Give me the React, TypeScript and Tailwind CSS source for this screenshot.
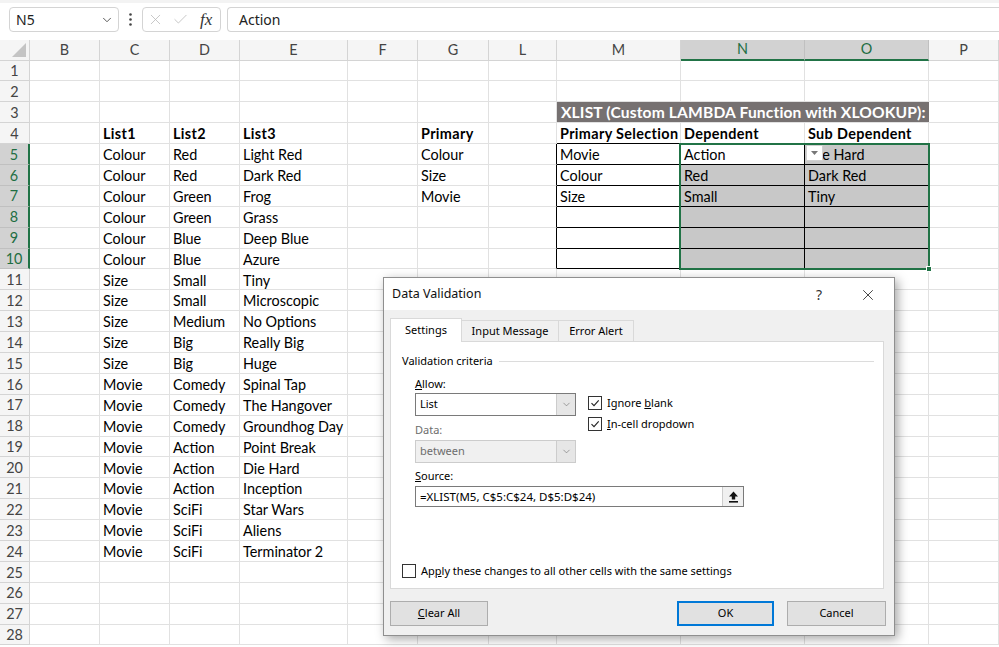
import { ChevronDown, X, Check } from 'lucide-react'

const cols = [
  { k: 'B', w: 'w-[70px]' },
  { k: 'C', w: 'w-[70px]' },
  { k: 'D', w: 'w-[70px]' },
  { k: 'E', w: 'w-[108px]' },
  { k: 'F', w: 'w-[70px]' },
  { k: 'G', w: 'w-[71px]' },
  { k: 'L', w: 'w-[68px]' },
  { k: 'M', w: 'w-[124px]' },
  { k: 'N', w: 'w-[124px]' },
  { k: 'O', w: 'w-[124px]' },
  { k: 'P', w: 'w-[70px]' },
]

const lists = [
  ['Colour', 'Red', 'Light Red'],
  ['Colour', 'Red', 'Dark Red'],
  ['Colour', 'Green', 'Frog'],
  ['Colour', 'Green', 'Grass'],
  ['Colour', 'Blue', 'Deep Blue'],
  ['Colour', 'Blue', 'Azure'],
  ['Size', 'Small', 'Tiny'],
  ['Size', 'Small', 'Microscopic'],
  ['Size', 'Medium', 'No Options'],
  ['Size', 'Big', 'Really Big'],
  ['Size', 'Big', 'Huge'],
  ['Movie', 'Comedy', 'Spinal Tap'],
  ['Movie', 'Comedy', 'The Hangover'],
  ['Movie', 'Comedy', 'Groundhog Day'],
  ['Movie', 'Action', 'Point Break'],
  ['Movie', 'Action', 'Die Hard'],
  ['Movie', 'Action', 'Inception'],
  ['Movie', 'SciFi', 'Star Wars'],
  ['Movie', 'SciFi', 'Aliens'],
  ['Movie', 'SciFi', 'Terminator 2'],
]

const values: Record<string, string> = {
  C4: 'List1',
  D4: 'List2',
  E4: 'List3',
  G4: 'Primary',
  M4: 'Primary Selection',
  N4: 'Dependent',
  O4: 'Sub Dependent',
  G5: 'Colour',
  G6: 'Size',
  G7: 'Movie',
  M5: 'Movie',
  M6: 'Colour',
  M7: 'Size',
  N5: 'Action',
  N6: 'Red',
  N7: 'Small',
  O5: 'Die Hard',
  O6: 'Dark Red',
  O7: 'Tiny',
}
lists.forEach((r, i) => {
  values[`C${i + 5}`] = r[0]
  values[`D${i + 5}`] = r[1]
  values[`E${i + 5}`] = r[2]
})

const rows = Array.from({ length: 28 }, (_, i) => i + 1)
const tableCols = ['M', 'N', 'O']

function Cell({ col, w, row }: { col: string; w: string; row: number }) {
  const inTable = tableCols.includes(col) && row >= 5 && row <= 10
  const rightBlack = inTable || (col === 'L' && row >= 5 && row <= 10)
  const bottomBlack = inTable || (tableCols.includes(col) && row === 4)
  const selected = (col === 'N' || col === 'O') && row >= 5 && row <= 10 && !(col === 'N' && row === 5)
  const text = values[`${col}${row}`]
  return (
    <div
      className={`${w} h-full shrink-0 border-r border-b flex items-center pl-[3px] pt-[2px] whitespace-nowrap overflow-visible relative ${
        rightBlack ? 'border-r-black' : 'border-r-[#e1e1e1]'
      } ${bottomBlack ? 'border-b-black' : 'border-b-[#e1e1e1]'} ${selected ? 'bg-[#c8c8c8]' : 'bg-white'} ${
        row === 4 ? 'font-bold tracking-[0.35px]' : ''
      }`}
    >
      {text}
      {col === 'O' && row === 5 && (
        <div className="absolute left-[1px] top-[1px] w-[17px] h-[16px] bg-white border border-[#d0d0d0] flex items-center justify-center">
          <svg width="7" height="4" viewBox="0 0 7 4">
            <path d="M0 0 L7 0 L3.5 4 Z" fill="#777" />
          </svg>
        </div>
      )}
    </div>
  )
}

function CheckBox({ checked }: { checked: boolean }) {
  return (
    <div className="w-[14px] h-[14px] border border-[#333] bg-white flex items-center justify-center shrink-0">
      {checked && (
        <svg width="10" height="10" viewBox="0 0 10 10">
          <path d="M1.5 5.2 L4 7.7 L8.7 2.3" fill="none" stroke="#222" strokeWidth="1.1" />
        </svg>
      )}
    </div>
  )
}

function Select({ value, disabled }: { value: string; disabled?: boolean }) {
  return (
    <div
      className={`w-[161px] h-[23px] border flex items-center ${
        disabled ? 'bg-[#f0f0f0] border-[#cccccc] text-[#6d6d6d]' : 'bg-white border-[#7a7a7a] text-black'
      }`}
    >
      <span className="flex-1 pl-[4px]">{value}</span>
      <div className="w-[19px] h-full bg-[#e6e6e6] border-l border-[#cccccc] flex items-center justify-center">
        <ChevronDown size={11} strokeWidth={1.2} className="text-[#606060]" />
      </div>
    </div>
  )
}

function Button({ children, w, primary }: { children: React.ReactNode; w: string; primary?: boolean }) {
  return (
    <div
      className={`${w} h-[25px] bg-[#e1e1e1] flex items-center justify-center ${
        primary ? 'border-2 border-[#0078d7]' : 'border border-[#adadad]'
      }`}
    >
      {children}
    </div>
  )
}

function Dialog() {
  return (
    <div className="absolute left-[383px] top-[277px] w-[512px] h-[359px] border border-[#8f8f8f] bg-[#f0f0f0] shadow-[3px_3px_10px_rgba(0,0,0,0.35)] font-['Noto_Sans',sans-serif] text-[11px] text-black flex flex-col">
      {/* title bar */}
      <div className="h-[32px] bg-white flex items-center pl-[8px] pt-[1px] shrink-0">
        <span className="text-[12.5px] flex-1 text-[#111]">Data Validation</span>
        <span className="text-[14px] text-[#333] w-[20px] text-center mr-[30px]">?</span>
        <X size={18} strokeWidth={1.1} className="text-[#222] mr-[17px]" />
      </div>

      <div className="flex-1 pl-[6px] pr-[8px] pt-[8px] flex flex-col">
        {/* tabs */}
        <div className="flex items-end h-[24px]">
          <div className="w-[72px] h-[24px] bg-white border border-b-0 border-[#d9d9d9] flex items-center justify-center relative z-10">
            Settings
          </div>
          <div className="w-[97px] h-[22px] bg-[#f0f0f0] border border-l-0 border-b-0 border-[#d9d9d9] flex items-center justify-center">
            Input Message
          </div>
          <div className="w-[75px] h-[22px] bg-[#f0f0f0] border border-l-0 border-b-0 border-[#d9d9d9] flex items-center justify-center">
            Error Alert
          </div>
        </div>

        {/* panel */}
        <div className="w-[494px] h-[248px] bg-white border border-[#d9d9d9] -mt-px pt-[11px] pl-[11px] pr-[9px] flex flex-col">
          <div className="h-[16px] flex items-center gap-[6px]">
            <span>Validation criteria</span>
            <div className="flex-1 h-px bg-[#dcdcdc]" />
          </div>

          <div className="pl-[13px] flex">
            <div className="flex flex-col">
              <div className="mt-[7px] h-[16px] leading-[16px]">
                <span className="underline">A</span>llow:
              </div>
              <div className="mt-[1px]">
                <Select value="List" />
              </div>
              <div className="mt-[6px] h-[16px] leading-[16px] text-[#6d6d6d]">Data:</div>
              <div className="mt-[2px]">
                <Select value="between" disabled />
              </div>
            </div>
            <div className="ml-[12px] flex flex-col">
              <div className="mt-[27px] h-[14px] flex items-center gap-[5px]">
                <CheckBox checked />
                <span>
                  Ignore <span className="underline">b</span>lank
                </span>
              </div>
              <div className="mt-[7px] h-[14px] flex items-center gap-[5px]">
                <CheckBox checked />
                <span>
                  <span className="underline">I</span>n-cell dropdown
                </span>
              </div>
            </div>
          </div>

          <div className="pl-[13px] mt-[5px] h-[16px] leading-[16px]">
            <span className="underline">S</span>ource:
          </div>
          <div className="ml-[13px] mt-[2px] w-[329px] h-[21px] border border-[#7a7a7a] flex items-center">
            <span className="flex-1 pl-[4px] text-[11.5px]">=XLIST(M5, C$5:C$24, D$5:D$24)</span>
            <div className="w-[21px] h-full bg-[#f0f0f0] border-l border-[#cccccc] flex items-center justify-center">
              <svg width="11" height="12" viewBox="0 0 11 12">
                <path d="M5.5 0.5 L10 5.5 L7.2 5.5 L7.2 8.5 L3.8 8.5 L3.8 5.5 L1 5.5 Z" fill="#111" />
                <rect x="1" y="10" width="9" height="1.6" fill="#111" />
              </svg>
            </div>
          </div>

          <div className="mt-[57px] h-[14px] flex items-center gap-[5px]">
            <CheckBox checked={false} />
            <span>
              Ap<span className="underline">p</span>ly these changes to all other cells with the same settings
            </span>
          </div>
        </div>

        {/* buttons */}
        <div className="mt-[12px] flex">
          <Button w="w-[98px]">
            <span className="underline">C</span>lear All
          </Button>
          <div className="flex-1" />
          <Button w="w-[97px]" primary>
            OK
          </Button>
          <div className="w-[13px]" />
          <Button w="w-[99px]">Cancel</Button>
        </div>
      </div>
    </div>
  )
}

export default function App() {
  return (
    <div className="w-[999px] h-[647px] overflow-hidden relative bg-white font-['Lato',sans-serif] text-[14.4px] text-black">
      {/* formula bar */}
      <div className="h-[40px] border-t-[3px] border-[#f3f3f3] flex items-start pt-[4px] pl-[9px] font-['Noto_Sans',sans-serif]">
        <div className="w-[110px] h-[25px] border border-[#d4d4d4] rounded-[4px] flex items-center pl-[6px] pr-[4px]">
          <span className="flex-1 text-[14px] text-[#222]">N5</span>
          <ChevronDown size={14} strokeWidth={1.5} className="text-[#444]" />
        </div>
        <div className="w-[23px] h-[25px] flex items-center justify-center">
          <svg width="3" height="13" viewBox="0 0 3 13">
            <circle cx="1.5" cy="1.5" r="1.3" fill="#444" />
            <circle cx="1.5" cy="6.5" r="1.3" fill="#444" />
            <circle cx="1.5" cy="11.5" r="1.3" fill="#444" />
          </svg>
        </div>
        <div className="w-[79px] h-[25px] border border-[#d4d4d4] rounded-[4px] flex items-center pl-[4px] gap-[8px]">
          <X size={17} strokeWidth={1.1} className="text-[#b8b8b8]" />
          <Check size={17} strokeWidth={1.1} className="text-[#b8b8b8]" />
          <span className="font-['Liberation_Serif',serif] italic text-[17px] text-[#333] ml-[3px]">fx</span>
        </div>
        <div className="ml-[6px] flex-1 h-[25px] border border-[#d4d4d4] rounded-l-[4px] border-r-0 flex items-center pl-[11px] text-[14px] text-[#222]">
          Action
        </div>
      </div>

      {/* column headers */}
      <div className="h-[20.5px] flex bg-[#f5f5f5] text-[#444]">
        <div className="w-[30px] h-full shrink-0 border-r border-b border-[#d4d4d4] flex items-end justify-end pr-[3px] pb-[3px]">
          <svg width="14" height="14" viewBox="0 0 14 14">
            <path d="M14 0 L14 14 L0 14 Z" fill="#c4c4c4" />
          </svg>
        </div>
        {cols.map((c) => {
          const sel = c.k === 'N' || c.k === 'O'
          return (
            <div
              key={c.k}
              className={`${c.w} h-full shrink-0 border-r flex items-center justify-center ${
                sel
                  ? 'bg-[#d2d2d2] text-[#1e6e42] border-b-2 border-b-[#217346] border-r-[#c0c0c0]'
                  : 'border-b border-[#d4d4d4]'
              }`}
            >
              {c.k}
            </div>
          )
        })}
      </div>

      {/* rows */}
      {rows.map((r) => {
        const sel = r >= 5 && r <= 10
        return (
          <div key={r} className="h-[20.9px] flex">
            <div
              className={`w-[30px] h-full shrink-0 border-b flex items-center justify-center pt-[1px] ${
                sel
                  ? 'bg-[#d2d2d2] text-[#1e6e42] border-r-2 border-r-[#217346] border-b-[#c0c0c0]'
                  : 'bg-[#f5f5f5] text-[#444] border-r border-[#d4d4d4]'
              }`}
            >
              {r}
            </div>
            {r === 3
              ? cols.map((c) =>
                  c.k === 'M' ? (
                    <div
                      key="merged"
                      className="w-[372px] h-full shrink-0 bg-[#767171] text-white font-bold text-[15.6px] tracking-[0.15px] flex items-center pl-[4px] pt-[1px] border-b border-[#e1e1e1] whitespace-nowrap overflow-hidden"
                    >
                      XLIST (Custom LAMBDA Function with XLOOKUP):
                    </div>
                  ) : c.k === 'N' || c.k === 'O' ? null : (
                    <Cell key={c.k} col={c.k} w={c.w} row={r} />
                  )
                )
              : cols.map((c) => <Cell key={c.k} col={c.k} w={c.w} row={r} />)}
          </div>
        )
      })}

      {/* selection outline N5:O10 */}
      <div className="absolute left-[679px] top-[143px] w-[251px] h-[127px] border-2 border-[#217346] pointer-events-none" />
      <div className="absolute left-[926px] top-[266px] w-[6px] h-[6px] bg-[#217346] border border-white" />

      <Dialog />
    </div>
  )
}
